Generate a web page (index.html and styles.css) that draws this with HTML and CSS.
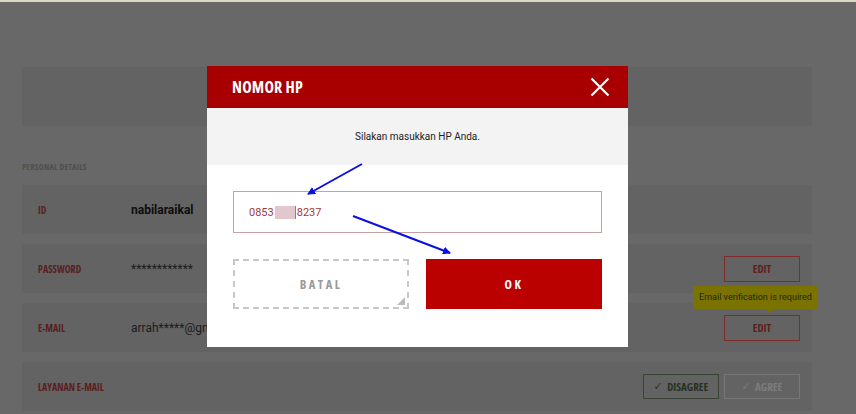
FILE: index.html
```html
<!DOCTYPE html>
<html lang="id">
<head>
<meta charset="utf-8">
<title>Nomor HP</title>
<link rel="stylesheet" href="styles.css">
</head>
<body>
<div class="topline"></div>
<main class="page">
  <div class="top-card"></div>
  <h2 class="section-title">PERSONAL DETAILS</h2>
  <div class="rows">
    <div class="row">
      <span class="label">ID</span>
      <span class="value bold">nabilaraikal</span>
    </div>
    <div class="row">
      <span class="label">PASSWORD</span>
      <span class="value">************</span>
      <div class="actions"><button class="edit">EDIT</button></div>
    </div>
    <div class="row">
      <span class="label">E-MAIL</span>
      <span class="value">arrah*****@gmail.com</span>
      <div class="actions">
        <div class="edit-wrap">
          <div class="tooltip">Email verification is required</div>
          <button class="edit">EDIT</button>
        </div>
      </div>
    </div>
    <div class="row">
      <span class="label">LAYANAN E-MAIL</span>
      <span class="value"></span>
      <div class="actions gap">
        <button class="choice disagree"><span class="check">✓</span>DISAGREE</button>
        <button class="choice agree"><span class="check">✓</span>AGREE</button>
      </div>
    </div>
  </div>
</main>

<div class="modal">
  <div class="modal-head">
    <span class="modal-title">NOMOR HP</span>
    <svg class="close" width="20" height="20" viewBox="0 0 20 20"><path d="M1.5 1.5 L18.5 18.5 M18.5 1.5 L1.5 18.5" stroke="#fff" stroke-width="2.2" fill="none"/></svg>
  </div>
  <div class="modal-sub">Silakan masukkan HP Anda.</div>
  <div class="modal-body">
    <div class="phone-input"><span>0853</span><span class="mask"></span><span>8237</span></div>
    <div class="modal-buttons">
      <button class="btn-cancel">BATAL<span class="grip"></span></button>
      <button class="btn-ok">OK</button>
    </div>
  </div>
</div>

<svg class="arrows" width="856" height="414" viewBox="0 0 856 414">
  <defs>
    <marker id="ah" markerWidth="8" markerHeight="8" refX="7" refY="4" orient="auto" markerUnits="userSpaceOnUse">
      <path d="M0 0 L8 4 L0 8 Z" fill="#0a10e0"/>
    </marker>
  </defs>
  <line x1="362" y1="164" x2="308" y2="194" stroke="#0a10e0" stroke-width="2" marker-end="url(#ah)"/>
  <line x1="353" y1="216" x2="450" y2="253" stroke="#0a10e0" stroke-width="2" marker-end="url(#ah)"/>
</svg>
</body>
</html>
```

FILE: styles.css
```css
* { box-sizing: border-box; }
html, body { margin: 0; padding: 0; }
body {
  background: #686868;
  font-family: Roboto, "Liberation Sans", sans-serif;
  width: 856px;
  height: 414px;
  overflow: hidden;
  position: relative;
}
.topline {
  height: 2px;
  background: #dcd8c8;
}
.page {
  padding: 65px 44px 0 22px;
}
.top-card {
  height: 59px;
  background: #636363;
}
.section-title, .label, button, .modal-title {
  font-family: "Open Sans", sans-serif;
  font-stretch: 75%;
  font-weight: 700;
}
.section-title {
  margin: 35px 0 0 0;
  height: 24px;
  font-size: 8.5px;
  letter-spacing: 0.2px;
  color: #4f4f4f;
}
.rows {
  display: flex;
  flex-direction: column;
  gap: 10px;
}
.row {
  height: 49px;
  background: #636363;
  display: flex;
  align-items: center;
  padding: 0 12px 0 16px;
}
.label {
  width: 93px;
  font-size: 10px;
  color: #5a1e1e;
}
.value {
  flex: 1;
  font-size: 12px;
  color: #1c1c1c;
}
.value.bold { font-weight: bold; color: #0e0e0e; }
.actions {
  display: flex;
  align-items: center;
}
.actions.gap { gap: 5px; }
.edit-wrap { position: relative; }
button { cursor: pointer; }
.edit {
  width: 76px;
  height: 26px;
  background: transparent;
  border: 1px solid #7e2c2c;
  color: #5e1e1e;
  font-size: 11px;
  padding: 0;
}
.tooltip {
  position: absolute;
  left: -31px;
  top: -29px;
  width: 125px;
  height: 23px;
  background: #7b7300;
  color: #25251a;
  font-family: Roboto, "Liberation Sans", sans-serif;
  font-size: 9px;
  border-radius: 2px;
  display: flex;
  align-items: center;
  justify-content: center;
  white-space: nowrap;
}
.tooltip::after {
  content: "";
  position: absolute;
  left: 73px;
  bottom: -4px;
  border-left: 4px solid transparent;
  border-right: 4px solid transparent;
  border-top: 4px solid #7b7300;
}
.choice {
  width: 76px;
  height: 25px;
  background: transparent;
  font-size: 11px;
  padding: 0;
  display: flex;
  align-items: center;
  justify-content: center;
  gap: 5px;
}
.check { font-family: "DejaVu Sans", sans-serif; font-size: 11px; font-weight: normal; }
.disagree { border: 1px solid #3a4436; color: #26321f; }
.agree { border: 1px solid #777; color: #7c7c7c; }

/* Modal */
.modal {
  position: absolute;
  left: 207px;
  top: 66px;
  width: 421px;
  height: 281px;
  background: #fff;
  display: flex;
  flex-direction: column;
}
.modal-head {
  height: 42px;
  background: #a80000;
  display: flex;
  align-items: center;
  justify-content: space-between;
  padding: 0 18px 0 25px;
}
.modal-title {
  color: #fff;
  font-size: 16px;
  letter-spacing: 0.2px;
}
.modal-sub {
  height: 57px;
  background: #f3f3f3;
  display: flex;
  align-items: center;
  justify-content: center;
  font-size: 10px;
  color: #222;
}
.modal-body {
  padding: 26px 26px 0 26px;
}
.phone-input {
  height: 42px;
  border: 1px solid #c4a2a4;
  display: flex;
  align-items: center;
  padding-left: 15px;
  color: #a13a3a;
  font-size: 11px;
}
.mask {
  display: inline-block;
  width: 21px;
  height: 13px;
  background: #e2c8cc;
  border-right: 1px solid #a77;
  margin: 0 1px 0 1px;
}
.modal-buttons {
  margin-top: 26px;
  display: flex;
  gap: 17px;
}
.modal-buttons button {
  width: 176px;
  height: 50px;
  font-size: 12.5px;
  letter-spacing: 2.5px;
}
.btn-cancel {
  position: relative;
  background: #fff;
  border: 2px dashed #c8c8c8;
  color: #9a9a9a;
}
.grip {
  position: absolute;
  right: 2px;
  bottom: 2px;
  width: 0;
  height: 0;
  border-left: 8px solid transparent;
  border-bottom: 8px solid #bbb;
}
.btn-ok {
  background: #bb0000;
  border: none;
  color: #fff;
}
.arrows {
  position: absolute;
  left: 0;
  top: 0;
  pointer-events: none;
}
```
